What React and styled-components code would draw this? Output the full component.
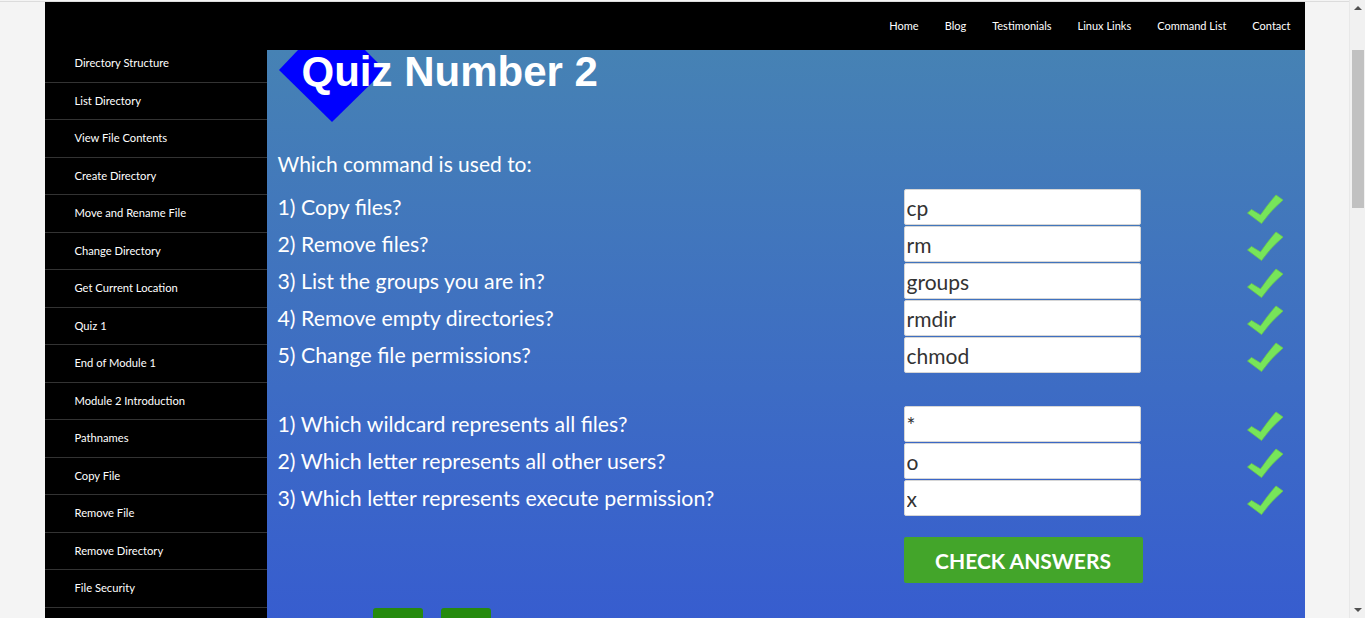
import React from 'react';
import styled, { createGlobalStyle } from 'styled-components';

const GlobalStyle = createGlobalStyle`
  html, body {
    margin: 0;
    padding: 0;
    background-color: #f4f4f4;
  }
  body {
    padding-top: 1px;
    font-family: Lato, 'Open Sans', sans-serif;
  }
  * {
    box-sizing: border-box;
  }
`;

const Page = styled.div`
  border-top: 1px solid #dcdcdc;
  padding-right: 16px;
`;

const Container = styled.div`
  width: 1260px;
  margin: 0 auto;
`;

const Header = styled.header`
  height: 48px;
  background-color: #000;
  display: flex;
  justify-content: flex-end;
  align-items: center;
  padding: 0 14px 2px 0;
`;

const Nav = styled.nav`
  display: flex;
  gap: 26px;
  & a {
    color: #fff;
    font-family: Lato, sans-serif;
    font-size: 11px;
    text-decoration: none;
  }
`;

const Body = styled.div`
  display: flex;
  align-items: stretch;
`;

const Sidebar = styled.aside`
  width: 222px;
  flex-shrink: 0;
  background-color: #000;
`;

const SideItem = styled.div`
  padding: 11px 0 11px 30px;
  line-height: 14.5px;
  font-size: 11.2px;
  color: #fff;
  border-bottom: 1px solid #333;
  &:first-child {
    padding-top: 6px;
  }
`;

const Main = styled.main`
  flex: 1;
  padding: 0 0 40px 11px;
  background: linear-gradient(180deg, #4682b4 0px, #375dcf 568px);
`;

const TitleWrap = styled.div`
  position: relative;
  padding-left: 24px;
`;

const Diamond = styled.svg`
  position: absolute;
  left: 0;
  top: 0;
`;

const Title = styled.h1`
  position: relative;
  margin: 0;
  font-family: 'Liberation Sans', Arial, sans-serif;
  font-weight: bold;
  font-size: 42px;
  line-height: 44px;
  color: #fff;
`;

const Intro = styled.p`
  margin: 55px 0 10px;
  font-size: 21px;
  line-height: 30px;
  color: #fff;
`;

const QuestionGrid = styled.div`
  display: grid;
  grid-template-columns: 626px 237px 1fr;
  row-gap: 1px;
  align-items: center;
  margin-top: ${({ $gap }) => $gap || 0}px;
`;

const Question = styled.label`
  font-size: 21.3px;
  color: #fff;
`;

const Answer = styled.input`
  width: 237px;
  height: 36px;
  border: 1px solid #d6d6d6;
  border-radius: 2px;
  padding: 0 2px;
  font-family: Lato, sans-serif;
  font-size: 21px;
  color: #333;
  background: #fff;
  outline: none;
`;

const Tick = styled.svg`
  justify-self: end;
  margin: 4px 21px 0 0;
`;

const CheckButton = styled.button`
  grid-column: 2;
  width: 239px;
  height: 46px;
  border: none;
  border-radius: 2px;
  background-color: #43a52a;
  color: #fff;
  font-family: Lato, sans-serif;
  font-weight: bold;
  font-size: 21px;
  text-transform: uppercase;
  cursor: pointer;
`;

const Pager = styled.div`
  display: flex;
  gap: 18px;
  padding-left: 95px;
  margin-top: 25px;
`;

const PagerButton = styled.button`
  width: 50px;
  height: 46px;
  border: none;
  border-radius: 3px;
  background-color: #268a0e;
`;

const Scrollbar = styled.div`
  position: fixed;
  top: 0;
  right: 0;
  bottom: 0;
  width: 16px;
  background-color: #f1f1f1;
  border-left: 1px solid #e8e8e8;
  display: flex;
  flex-direction: column;
  align-items: center;
  & .arrow {
    height: 16px;
    display: flex;
    align-items: center;
    justify-content: center;
  }
  & .track {
    flex: 1;
    width: 100%;
    padding: 34px 1px 0 2px;
  }
  & .thumb {
    height: 158px;
    background-color: #c1c1c1;
  }
`;

const navLinks = ['Home', 'Blog', 'Testimonials', 'Linux Links', 'Command List', 'Contact'];

const sideLinks = [
  'Directory Structure',
  'List Directory',
  'View File Contents',
  'Create Directory',
  'Move and Rename File',
  'Change Directory',
  'Get Current Location',
  'Quiz 1',
  'End of Module 1',
  'Module 2 Introduction',
  'Pathnames',
  'Copy File',
  'Remove File',
  'Remove Directory',
  'File Security',
];

const commands = [
  ['1) Copy files?', 'cp'],
  ['2) Remove files?', 'rm'],
  ['3) List the groups you are in?', 'groups'],
  ['4) Remove empty directories?', 'rmdir'],
  ['5) Change file permissions?', 'chmod'],
];

const symbols = [
  ['1) Which wildcard represents all files?', '*'],
  ['2) Which letter represents all other users?', 'o'],
  ['3) Which letter represents execute permission?', 'x'],
];

const CheckMark = () => (
  <Tick width='37' height='30' viewBox='0 0 37 30'>
    <path
      d='M0.5 19 L4.5 15.5 L13.5 21 Q21 10 29 1 L36 6 Q24 16 14.5 29.5 Z'
      fill='#77e55a'
      stroke='#69c94d'
      strokeWidth='0.8'
    />
  </Tick>
);

const Row = ({ question, answer }) => (
  <>
    <Question>{question}</Question>
    <Answer defaultValue={answer} readOnly />
    <CheckMark />
  </>
);

const App = () => {
  return (
    <Page>
      <GlobalStyle />
      <Container>
        <Header>
          <Nav>
            {navLinks.map((link) => (
              <a key={link} href='#'>
                {link}
              </a>
            ))}
          </Nav>
        </Header>
        <Body>
          <Sidebar>
            {sideLinks.map((link) => (
              <SideItem key={link}>{link}</SideItem>
            ))}
          </Sidebar>
          <Main>
            <TitleWrap>
              <Diamond width='108' height='73' viewBox='0 0 108 73'>
                <polygon points='20,0 87,0 107,20 54,72 1,20' fill='#0000ff' />
              </Diamond>
              <Title>Quiz Number 2</Title>
            </TitleWrap>
            <Intro>Which command is used to:</Intro>
            <QuestionGrid>
              {commands.map(([q, a]) => (
                <Row key={q} question={q} answer={a} />
              ))}
            </QuestionGrid>
            <QuestionGrid $gap={33}>
              {symbols.map(([q, a]) => (
                <Row key={q} question={q} answer={a} />
              ))}
            </QuestionGrid>
            <QuestionGrid $gap={21}>
              <CheckButton>Check Answers</CheckButton>
            </QuestionGrid>
            <Pager>
              <PagerButton aria-label='Previous page' />
              <PagerButton aria-label='Next page' />
            </Pager>
          </Main>
        </Body>
      </Container>
      <Scrollbar>
        <div className='arrow'>
          <svg width='8' height='4' viewBox='0 0 8 4'>
            <polygon points='0,4 4,0 8,4' fill='#505050' />
          </svg>
        </div>
        <div className='track'>
          <div className='thumb' />
        </div>
        <div className='arrow'>
          <svg width='8' height='4' viewBox='0 0 8 4'>
            <polygon points='0,0 8,0 4,4' fill='#505050' />
          </svg>
        </div>
      </Scrollbar>
    </Page>
  );
};

export default App;
